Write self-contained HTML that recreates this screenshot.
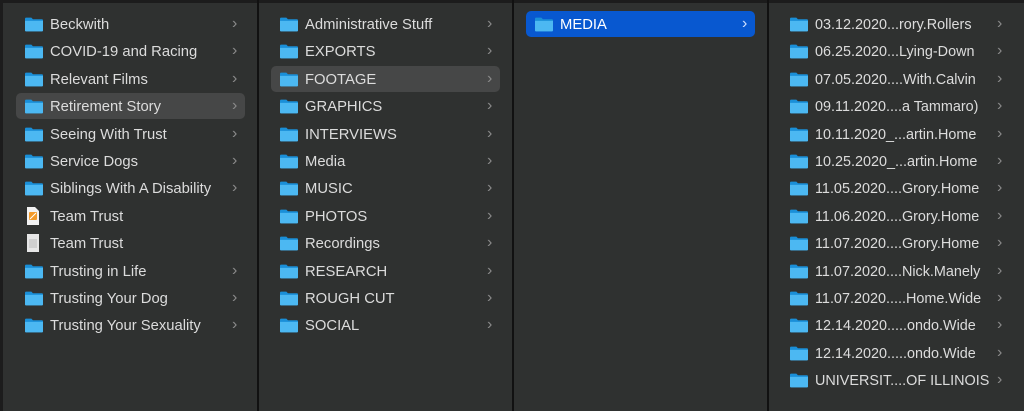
<!DOCTYPE html>
<html><head><style>
*{margin:0;padding:0;box-sizing:border-box}
body{width:1024px;height:411px;background:#2f3130;overflow:hidden;position:relative;font-family:"Liberation Sans",sans-serif;font-size:14.8px;color:#dcdcdc}
.top{position:absolute;left:0;top:0;width:1024px;height:3px;background:#1c1c1c}
.edge{position:absolute;left:0;top:0;width:3px;height:411px;background:#1c1c1c}
.div{position:absolute;top:0;width:2px;height:411px;background:#111}
.row{position:absolute;height:26px;border-radius:5px}
.row .t{position:absolute;top:6px;white-space:nowrap}
.row .c{position:absolute;top:4px;color:#8a8a8a;font-size:16px}
.ic{position:absolute;top:5px;width:18px;height:16px}
.sel{background:#464747}
.blue{background:#0858d0;color:#fff}
.blue .c{color:#cfe0ff}
</style></head><body>
<div class="top"></div><div class="edge"></div>
<div class="div" style="left:257px"></div>
<div class="div" style="left:512px"></div>
<div class="div" style="left:767px"></div>
<svg width="0" height="0" style="position:absolute"><defs>
<symbol id="f" viewBox="0 0 17 14"><path d="M0 2a1 1 0 0 1 1-1h5l1.5 1.5H16a1 1 0 0 1 1 1V13a1 1 0 0 1-1 1H1a1 1 0 0 1-1-1z" fill="#1a8fd8"/><path d="M0 4h17v9a1 1 0 0 1-1 1H1a1 1 0 0 1-1-1z" fill="#4cb8f2"/></symbol>
</defs></svg>
<div id="c"></div>
<script>
const cols=[
{x:16,w:229,ix:9,tx:34,cx:216,items:["Beckwith","COVID-19 and Racing","Relevant Films","Retirement Story","Seeing With Trust","Service Dogs","Siblings With A Disability","Team Trust","Team Trust","Trusting in Life","Trusting Your Dog","Trusting Your Sexuality"],sel:3,nochev:[7,8],file:[7,8]},
{x:271,w:229,ix:9,tx:34,cx:216,items:["Administrative Stuff","EXPORTS","FOOTAGE","GRAPHICS","INTERVIEWS","Media","MUSIC","PHOTOS","Recordings","RESEARCH","ROUGH CUT","SOCIAL"],sel:2},
{x:526,w:229,ix:9,tx:34,cx:216,items:["MEDIA"],blue:0},
{x:781,w:229,ix:9,tx:34,cx:216,items:["03.12.2020...rory.Rollers","06.25.2020...Lying-Down","07.05.2020....With.Calvin","09.11.2020....a Tammaro)","10.11.2020_...artin.Home","10.25.2020_...artin.Home","11.05.2020....Grory.Home","11.06.2020....Grory.Home","11.07.2020....Grory.Home","11.07.2020....Nick.Manely","11.07.2020.....Home.Wide","12.14.2020.....ondo.Wide","12.14.2020.....ondo.Wide","UNIVERSIT....OF ILLINOIS"]}
];
let h="";
cols.forEach((c,ci)=>{c.items.forEach((t,i)=>{
 const y=11+i*27.4;
 let cls="row"+(c.sel===i?" sel":"")+(c.blue===i?" blue":"");
 let icon;
 if(c.file&&c.file.includes(i)){
  icon=i==7?'<svg class="ic" style="left:'+(c.ix+1)+'px;top:4px;width:14px;height:18px" viewBox="0 0 14 18"><path d="M1 0h8l4 4v14H1z" fill="#f2f2f2"/><rect x="3" y="5" width="8" height="8" rx="1" fill="#f39a2a"/><path d="M4 12l6-6" stroke="#fff" stroke-width="1"/></svg>'
  :'<svg class="ic" style="left:'+(c.ix+1)+'px;top:4px;width:14px;height:18px" viewBox="0 0 14 18"><path d="M1 0h12v18H1z" fill="#e6e6e6"/><rect x="3" y="5" width="8" height="9" fill="#cfcfcf"/></svg>';
 } else icon='<svg class="ic" style="left:'+c.ix+'px"><use href="#f"/></svg>';
 const fs=ci==3?'font-size:14.4px;':'';
 h+='<div class="'+cls+'" style="left:'+c.x+'px;top:'+y+'px;width:'+c.w+'px">'+icon+'<span class="t" style="'+fs+'left:'+c.tx+'px">'+t+'</span>'+((c.nochev&&c.nochev.includes(i))?'':'<span class="c" style="left:'+c.cx+'px">›</span>')+'</div>';
});});
document.getElementById("c").innerHTML=h;
</script>
</body></html>
